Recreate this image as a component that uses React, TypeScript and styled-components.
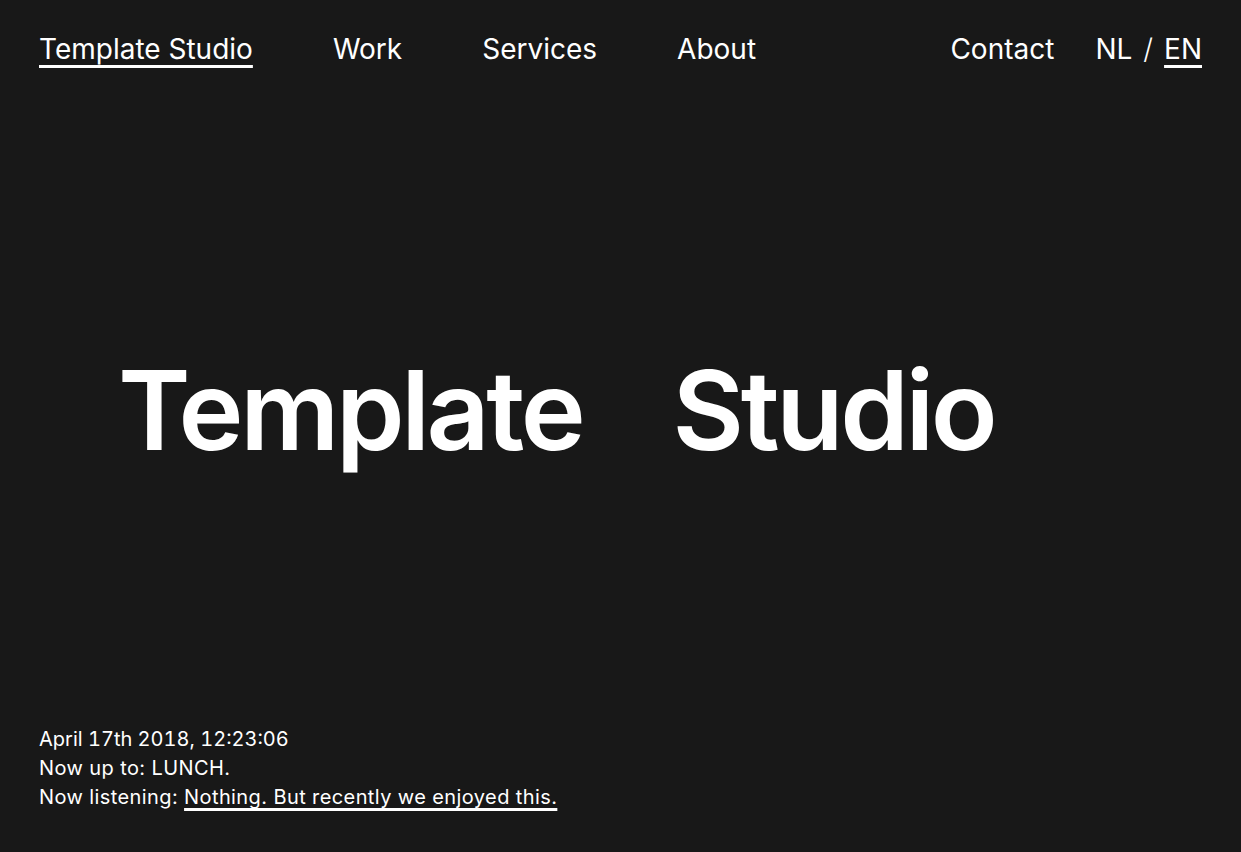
import React from "react";
import styled, { createGlobalStyle } from "styled-components";

const Global = createGlobalStyle`
  html, body { margin: 0; padding: 0; background: #181818; }
  body { font-family: Inter, "Liberation Sans", sans-serif; color: #fff; -webkit-font-smoothing: antialiased; }
  * { box-sizing: border-box; }
`;

const Page = styled.div`
  height: 852px;
  display: flex;
  flex-direction: column;
  background: #181818;
`;

const Header = styled.header`
  display: flex;
  align-items: baseline;
  padding: 30px 39px 0 39px;
  font-size: 28px;
  line-height: 38px;
  letter-spacing: 0;
`;

const NavGroup = styled.nav`
  display: flex;
  gap: 80px;
  flex: 1;
`;

const RightGroup = styled.div`
  display: flex;
  gap: 41px;
  align-items: baseline;
`;

const NavLink = styled.a<{ $active?: boolean }>`
  color: #fff;
  text-decoration: ${(p) => (p.$active ? "underline" : "none")};
  text-decoration-thickness: 3px;
  text-underline-offset: 6px;
  cursor: pointer;
`;

const Lang = styled.div`
  display: flex;
  gap: 11px;
`;

const Slash = styled.span`
  font-weight: 300;
`;

const Hero = styled.main`
  flex: 1;
  display: flex;
  align-items: center;
  padding-left: 118px;
  padding-top: 26px;
`;

const Title = styled.h1`
  margin: 0;
  font-size: 110px;
  font-weight: 600;
  letter-spacing: -3.4px;
  word-spacing: 66px;
  line-height: 1;
`;

const Footer = styled.footer`
  padding: 0 39px 40px 39px;
  font-size: 20px;
  line-height: 29px;
  letter-spacing: 0.4px;
`;

const Line = styled.div``;

const DateLine = styled.div`
  font-feature-settings: "tnum";
  letter-spacing: 0;
`;

const Link = styled.a`
  color: #fff;
  text-decoration: underline;
  text-decoration-thickness: 3px;
  text-underline-offset: 4px;
  cursor: pointer;
`;

export default function App() {
  return (
    <Page>
      <Global />
      <Header>
        <NavGroup>
          <NavLink $active>Template Studio</NavLink>
          <NavLink>Work</NavLink>
          <NavLink>Services</NavLink>
          <NavLink>About</NavLink>
        </NavGroup>
        <RightGroup>
          <NavLink>Contact</NavLink>
          <Lang>
            <NavLink>NL</NavLink>
            <Slash>/</Slash>
            <NavLink $active>EN</NavLink>
          </Lang>
        </RightGroup>
      </Header>
      <Hero>
        <Title>Template Studio</Title>
      </Hero>
      <Footer>
        <DateLine>April 17th 2018, 12:23:06</DateLine>
        <Line>Now up to: LUNCH.</Line>
        <Line>
          Now listening: <Link>Nothing. But recently we enjoyed this.</Link>
        </Line>
      </Footer>
    </Page>
  );
}
